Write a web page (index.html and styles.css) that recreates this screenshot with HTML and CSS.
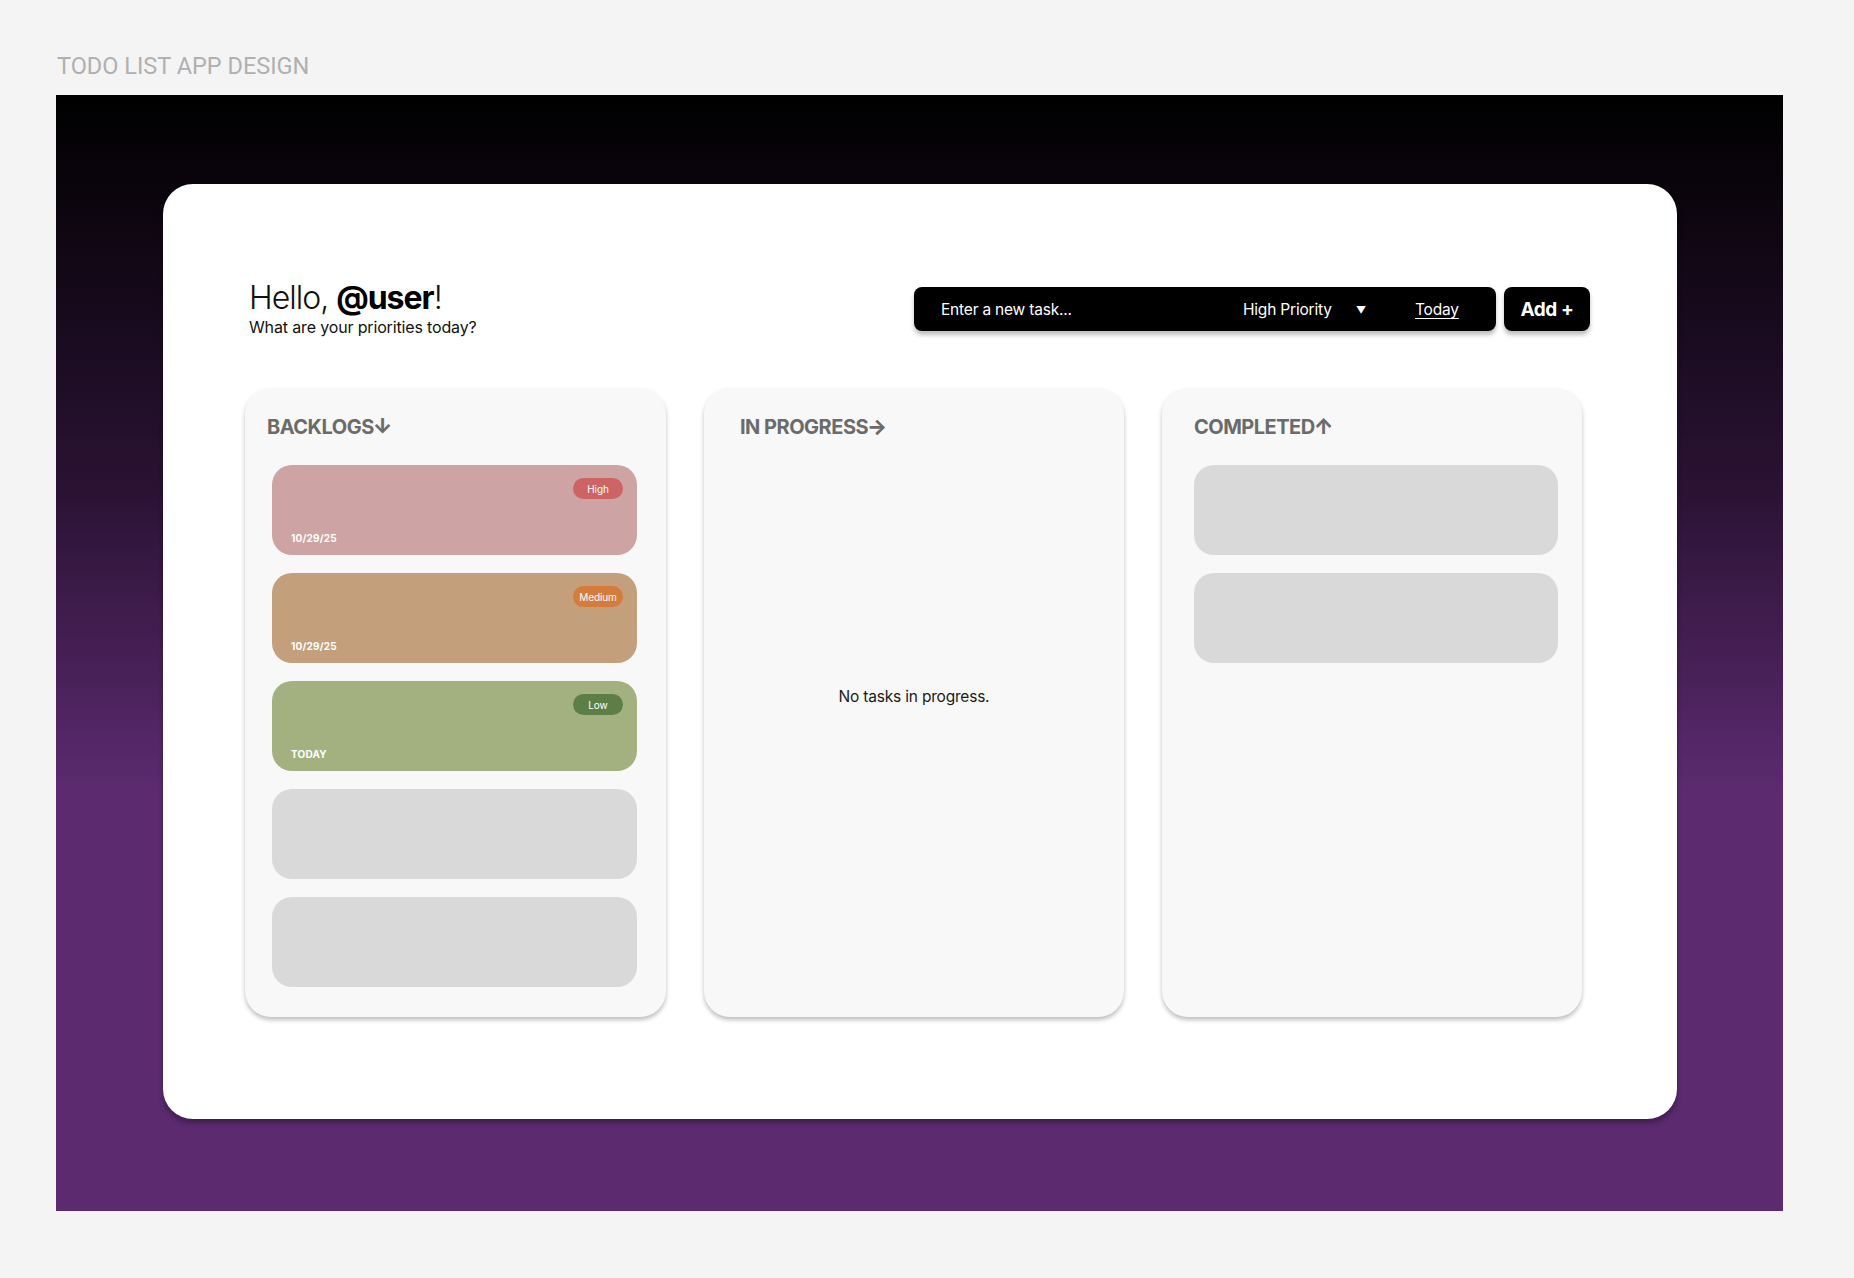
FILE: index.html
```html
<!DOCTYPE html>
<html lang="en">
<head>
<meta charset="utf-8">
<title>Todo List App Design</title>
<link rel="stylesheet" href="styles.css">
</head>
<body>
<div class="page-title">TODO LIST APP DESIGN</div>
<div class="frame">
  <div class="card">
    <div class="header">
      <div class="greeting">
        <div class="hello">Hello, <b>@user</b>!</div>
        <div class="sub">What are your priorities today?</div>
      </div>
      <div class="controls">
        <div class="bar">
          <span class="placeholder">Enter a new task...</span>
          <span class="priority">High Priority</span>
          <span class="caret">▼</span>
          <span class="today">Today</span>
        </div>
        <div class="add">Add +</div>
      </div>
    </div>
    <div class="columns">
      <div class="col col-backlog">
        <div class="col-title">BACKLOGS<span class="arr">↓</span></div>
        <div class="cards">
          <div class="task task-high">
            <span class="badge badge-high">High</span>
            <span class="date">10/29/25</span>
          </div>
          <div class="task task-med">
            <span class="badge badge-med">Medium</span>
            <span class="date">10/29/25</span>
          </div>
          <div class="task task-low">
            <span class="badge badge-low">Low</span>
            <span class="date">TODAY</span>
          </div>
          <div class="task task-empty"></div>
          <div class="task task-empty"></div>
        </div>
      </div>
      <div class="col col-progress">
        <div class="col-title">IN PROGRESS<span class="arr">→</span></div>
        <div class="empty-msg">No tasks in progress.</div>
      </div>
      <div class="col col-done">
        <div class="col-title">COMPLETED<span class="arr">↑</span></div>
        <div class="cards">
          <div class="task task-empty"></div>
          <div class="task task-empty"></div>
        </div>
      </div>
    </div>
  </div>
</div>
</body>
</html>
```

FILE: styles.css
```css
* { box-sizing: border-box; }
html, body { margin: 0; padding: 0; }
body {
  background: #f4f4f4;
  font-family: Inter, "Noto Sans", sans-serif;
  width: 1854px;
  height: 1278px;
  overflow: hidden;
}
.page-title {
  font-family: Roboto, "Liberation Sans", sans-serif;
  font-size: 23.5px;
  line-height: 28px;
  color: #b0b0b0;
  padding: 52px 0 0 57px;
  height: 95px;
}
.frame {
  margin-left: 56px;
  width: 1727px;
  height: 1116px;
  background: linear-gradient(180deg, #000 0%, #2a1233 35%, #5b2a6f 62%, #5b2a6f 100%);
  padding: 89px 106px 0 107px;
}
.card {
  width: 1514px;
  height: 935px;
  background: #fff;
  border-radius: 30px;
  box-shadow: 0 4px 5px rgba(0,0,0,0.3);
  padding: 96px 95px 0 82px;
}
.header {
  display: flex;
  justify-content: space-between;
  align-items: flex-start;
  padding-left: 4px;
  margin-right: -8px;
  height: 108px;
}
.hello {
  font-size: 32px;
  line-height: 35px;
  color: #111;
  font-weight: 300;
  letter-spacing: -1px;
}
.hello b { font-weight: 700; color: #000; }
.sub {
  font-size: 16px;
  line-height: 20px;
  margin-top: 2px;
  color: #111;
  letter-spacing: -0.15px;
}
.controls {
  display: flex;
  gap: 8px;
  margin-top: 7px;
}
.bar {
  width: 582px;
  height: 44px;
  background: #000;
  border-radius: 8px;
  box-shadow: 0 4px 4px rgba(0,0,0,0.25);
  display: flex;
  align-items: center;
  color: #fff;
  font-size: 15.5px;
  letter-spacing: -0.2px;
  padding-left: 27px;
  padding-top: 1px;
}
.placeholder { width: 302px; }
.priority { width: 113px; }
.caret { font-size: 10px; width: 59px; }
.today { text-decoration: underline; text-underline-offset: 3px; }
.add {
  width: 86px;
  height: 44px;
  background: #000;
  border-radius: 8px;
  box-shadow: 0 4px 4px rgba(0,0,0,0.25);
  color: #fff;
  font-weight: 700;
  font-size: 19px;
  letter-spacing: -0.4px;
  display: flex;
  align-items: center;
  justify-content: center;
}
.columns {
  display: grid;
  grid-template-columns: 421px 420px 420px;
  column-gap: 38px;
}
.col {
  height: 629px;
  background: #f8f8f8;
  border-radius: 26px;
  box-shadow: 0 3px 4px rgba(0,0,0,0.25);
  padding-top: 27px;
  display: flex;
  flex-direction: column;
}
.col-title {
  font-size: 20px;
  font-weight: 700;
  color: #6b6b6b;
  letter-spacing: -0.5px;
  line-height: 24px;
}
.arr { font-weight: 800; font-size: 21px; margin-left: -1px; }
.col-backlog { padding-left: 22px; padding-right: 29px; }
.col-backlog .cards { margin-left: 5px; }
.col-progress { padding-left: 36px; }
.col-done { padding-left: 32px; padding-right: 24px; }
.cards {
  margin-top: 26px;
  display: flex;
  flex-direction: column;
  gap: 18px;
}
.task {
  height: 90px;
  border-radius: 20px;
  display: flex;
  flex-direction: column;
  align-items: flex-start;
  padding: 13px 14px 0 19px;
}
.task-high { background: #cda3a3; }
.task-med { background: #c3a07b; }
.task-low { background: #a2b17f; }
.task-empty { background: #d9d9d9; }
.badge {
  align-self: flex-end;
  width: 50px;
  height: 21px;
  border-radius: 11px;
  color: #fff;
  font-size: 10px;
  display: flex;
  align-items: center;
  justify-content: center;
  letter-spacing: -0.1px;
}
.badge-high { background: #cc6464; }
.badge-med { background: #d57b3b; }
.badge-low { background: #5d7f47; }
.date {
  margin-top: 33px;
  font-size: 10px;
  font-weight: 700;
  color: #fff;
  letter-spacing: 0.2px;
}
.empty-msg {
  flex: 1;
  display: flex;
  align-items: center;
  justify-content: center;
  margin-left: -36px;
  padding-bottom: 64px;
  font-size: 15.5px;
  color: #1a1a1a;
  letter-spacing: -0.2px;
}
```
